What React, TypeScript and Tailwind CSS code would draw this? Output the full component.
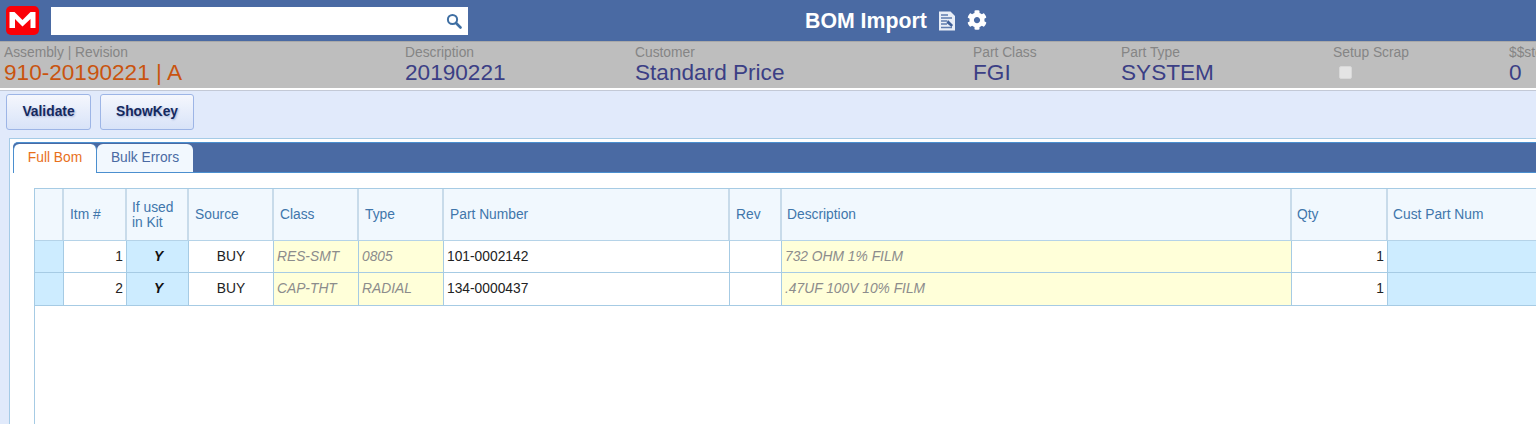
import React from "react";
import { FaCog } from "react-icons/fa";

const headers = [
  { t: "", w: "w-[29px]", p: "pl-[5px]" },
  { t: "Itm #", w: "w-[63px]", p: "pl-[6px]" },
  { t: "If used in Kit", w: "w-[62px]", p: "pl-[5px]" },
  { t: "Source", w: "w-[85px]", p: "pl-[6px]" },
  { t: "Class", w: "w-[85px]", p: "pl-[6px]" },
  { t: "Type", w: "w-[85px]", p: "pl-[6px]" },
  { t: "Part Number", w: "w-[286px]", p: "pl-[6px]" },
  { t: "Rev", w: "w-[52px]", p: "pl-[6px]" },
  { t: "Description", w: "w-[510px]", p: "pl-[5px]" },
  { t: "Qty", w: "w-[96px]", p: "pl-[5px]" },
  { t: "Cust Part Num", w: "w-[170px]", p: "pl-[5px]" },
];

const rows = [
  { n: "1", cls: "RES-SMT", type: "0805", pn: "101-0002142", desc: "732 OHM 1% FILM", h: "h-[32px]", p: "pt-[1px]" },
  { n: "2", cls: "CAP-THT", type: "RADIAL", pn: "134-0000437", desc: ".47UF 100V 10% FILM", h: "h-[33px]", p: "" },
];

function Field({ label, value, w, orange }: { label: string; value: string; w: string; orange?: boolean }) {
  return (
    <div className={`${w} shrink-0`}>
      <div className="text-[13.8px] leading-[16px] whitespace-nowrap text-[#858585]">{label}</div>
      <div className={`text-[22.6px] leading-[24px] ${orange ? "text-[#c9540f]" : "text-[#3b3f85]"}`}>{value}</div>
    </div>
  );
}

function Cell({ w, bg, className, children }: { w: string; bg: string; className?: string; children?: React.ReactNode }) {
  return (
    <div className={`${w} ${bg} shrink-0 border-r border-[#a6cbe4] flex items-center text-[13.8px] ${className ?? ""}`}>{children}</div>
  );
}

const btn =
  "h-[36px] rounded-[3px] border border-[#9db5e6] bg-gradient-to-b from-[#f5f7fd] to-[#d8e3f8] text-[13.8px] font-bold text-[#15295e] [text-shadow:1px_1px_2px_#a5b4d8]";

export default function App() {
  return (
    <div className="w-[1536px] h-[424px] overflow-hidden bg-[#e1eafb] font-['Liberation_Sans',Arial,sans-serif]">
      <header className="h-[41px] bg-[#4a6aa3] relative flex items-center pl-[6px]">
        <svg width="33" height="29" viewBox="0 0 33 29" className="shrink-0">
          <rect width="33" height="29" rx="5" fill="#fb0007" />
          <path d="M3.5 22V6h5l8 8 8-8h5v16h-5V13l-8 7.5L9 13v9z" fill="#fff" />
        </svg>
        <div className="ml-[12px] w-[417px] h-[28px] bg-white flex items-center justify-end pr-[6px]">
          <svg width="16" height="16" viewBox="0 0 16 16" fill="none" stroke="#3f6fa3" strokeWidth="2">
            <circle cx="6.5" cy="6.5" r="4.6" />
            <path d="M10 10l4.5 4.5" strokeWidth="2.6" strokeLinecap="round" />
          </svg>
        </div>
        <div className="absolute left-[805px] top-[9px] flex items-center">
          <span className="text-[21.3px] leading-[24px] font-bold text-white">BOM Import</span>
          <svg width="18" height="20" viewBox="0 0 18 20" className="ml-[11px] -mt-[1px]">
            <path d="M1 0.5h11.5l4.5 4.5v14.5H1z" fill="#e9eef7" />
            <path d="M3 4h7M3 7h11M3 10h6M3 13h6M3 16.5h11" stroke="#5f7cae" strokeWidth="1.3" />
            <path d="M10 9l5 5-1.5 2-5-4z" fill="#3f5f98" />
          </svg>
          <FaCog size={20} color="#fff" className="ml-[11px] -mt-[2px]" />
        </div>
      </header>

      <section className="h-[47px] bg-[#bebebe] border-t border-[#a9a9a9] flex pl-[4px] pt-[3px] overflow-hidden">
        <Field label="Assembly | Revision" value="910-20190221 | A" w="w-[401px]" orange />
        <Field label="Description" value="20190221" w="w-[230px]" />
        <Field label="Customer" value="Standard Price" w="w-[338px]" />
        <Field label="Part Class" value="FGI" w="w-[148px]" />
        <Field label="Part Type" value="SYSTEM" w="w-[212px]" />
        <div className="w-[176px] shrink-0">
          <div className="text-[13.8px] leading-[16px] text-[#858585]">Setup Scrap</div>
          <div className="ml-[6px] mt-[5px] w-[13px] h-[13px] rounded-[2px] bg-[#e4e4e4] border border-[#d8d8d8]" />
        </div>
        <Field label="$$std" value="0" w="w-[60px]" />
      </section>
      <div className="h-[3px] bg-white border-b border-[#c3c9d6]" />

      <div className="flex gap-[9px] pl-[6px] pt-[3px]">
        <button className={`w-[85px] ${btn}`}>Validate</button>
        <button className={`w-[94px] ${btn}`}>ShowKey</button>
      </div>

      <main className="ml-[9px] mt-[8px] h-[300px] bg-white border-l border-t border-[#a5cbe6] pl-[3px] pt-[3px]">
        <div className="h-[31px] bg-[#4a6aa3] border-t border-b border-[#4b8fcf] rounded-tl-[5px] flex items-end">
          <div className="w-[84px] h-[29px] -mb-px pb-[1px] bg-white border-l border-r border-[#4b8fcf] rounded-t-[6px] text-[13.8px] text-[#e8701a] flex items-center justify-center">Full Bom</div>
          <div className="w-[96px] h-[28px] bg-[#f2f8fe] rounded-t-[6px] text-[13.8px] text-[#4a6aa3] flex items-center justify-center">Bulk Errors</div>
        </div>

        <div className="mt-[15px] ml-[21px] h-[300px] border-l border-t border-[#a6cbe4] overflow-hidden">
          <div className="flex h-[52px] bg-[#f1f8fe] border-b border-[#b5d3e8]">
            {headers.map((h, i) => (
              <div
                key={i}
                className={`${h.w} ${h.p} shrink-0 border-r-2 border-[#c8dbea] flex items-center text-[13.8px] leading-[15px] text-[#4076ab] pr-[8px]`}
              >
                {h.t}
              </div>
            ))}
          </div>
          {rows.map((r) => (
            <div key={r.n} className={`flex ${r.h} border-b border-[#a6cbe4]`}>
              <Cell w="w-[29px]" bg="bg-[#cdecff]" />
              <Cell w="w-[63px]" bg="bg-white" className={`justify-end pr-[3px] text-[#222] ${r.p}`}>{r.n}</Cell>
              <Cell w="w-[62px]" bg="bg-[#cdecff]" className={`justify-center pl-[2px] font-bold italic text-[#111] ${r.p}`}>Y</Cell>
              <Cell w="w-[85px]" bg="bg-white" className={`justify-center text-[#222] ${r.p}`}>BUY</Cell>
              <Cell w="w-[85px]" bg="bg-[#ffffd9]" className={`italic text-[#8c8c8c] pl-[3px] ${r.p}`}>{r.cls}</Cell>
              <Cell w="w-[85px]" bg="bg-[#ffffd9]" className={`italic text-[#8c8c8c] pl-[3px] ${r.p}`}>{r.type}</Cell>
              <Cell w="w-[286px]" bg="bg-white" className={`text-[#222] pl-[3px] ${r.p}`}>{r.pn}</Cell>
              <Cell w="w-[52px]" bg="bg-white" />
              <Cell w="w-[510px]" bg="bg-[#ffffd9]" className={`italic text-[#8c8c8c] pl-[3px] ${r.p}`}>{r.desc}</Cell>
              <Cell w="w-[96px]" bg="bg-white" className={`justify-end pr-[3px] text-[#222] ${r.p}`}>1</Cell>
              <Cell w="w-[170px]" bg="bg-[#cdecff]" />
            </div>
          ))}
        </div>
      </main>
    </div>
  );
}
